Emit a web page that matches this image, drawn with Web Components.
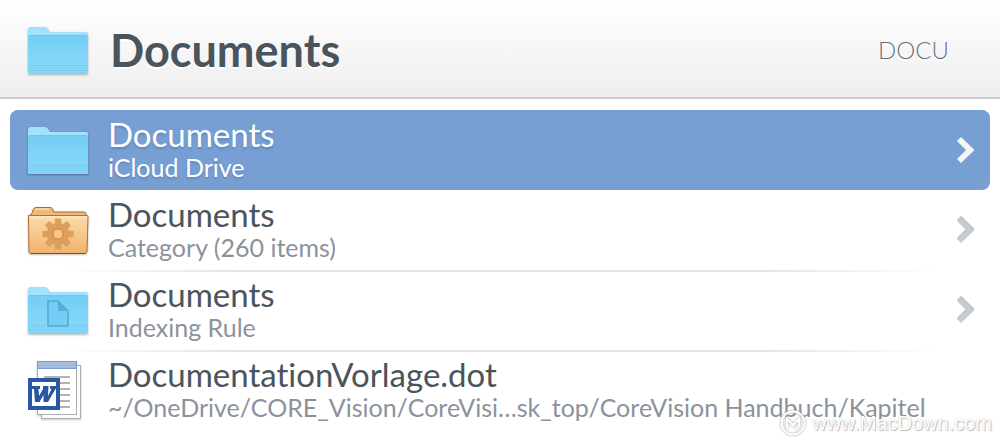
<!DOCTYPE html>
<html lang="en">
<head>
<meta charset="utf-8">
<title>Documents</title>
<style>
html, body { margin: 0; background: #fff; }
body { font-family: Lato, "Open Sans", sans-serif; font-variant-ligatures: none; color: #4a545c; overflow: hidden; min-height: 100vh; position: relative; }
</style>
</head>
<body>
<search-panel>
  <panel-header slot="header" abbreviation="DOCU"><item-icon kind="folder" slot="icon"></item-icon>Documents</panel-header>
  <result-row selected more><item-icon kind="folder" slot="icon"></item-icon>Documents<span slot="detail">iCloud Drive</span></result-row>
  <result-row more divided><item-icon kind="category" slot="icon"></item-icon>Documents<span slot="detail">Category (260 items)</span></result-row>
  <result-row more divided><item-icon kind="rule" slot="icon"></item-icon>Documents<span slot="detail">Indexing Rule</span></result-row>
  <result-row><item-icon kind="word" slot="icon"></item-icon>DocumentationVorlage.dot<span slot="detail">~/OneDrive/CORE_Vision/CoreVisi…sk_top/CoreVision Handbuch/Kapitel</span></result-row>
</search-panel>
<site-mark>www.MacDown.com</site-mark>

<script>
const folder = extra => `
<svg viewBox="0 0 64 64" aria-hidden="true">
  <defs><linearGradient id="f" x1="0" y1="0" x2="0" y2="1"><stop offset="0" stop-color="#74cdf5"/><stop offset="1" stop-color="#8bdbfa"/></linearGradient></defs>
  <g style="filter:drop-shadow(0 1px 1px rgba(0,0,0,.28))">
    <path d="M2 10Q2 7 5 7H19Q21 7 22 9L24 12H60Q62 12 62 14V52Q62 54 60 54H4Q2 54 2 52Z" fill="#a2e2fd"/>
    <path d="M2 17Q2 15 4 15H60Q62 15 62 17V52Q62 54 60 54H4Q2 54 2 52Z" fill="url(#f)"/>
  </g>
  <path d="M3 15.500H61" stroke="#75c1e0" stroke-width=".8"/>
  <path d="M2 45.500H62M2 48H62M2 50.500H62M3 53H61" stroke="#6cc5ea" stroke-width=".6"/>
  ${extra}
</svg>`;
const teeth = [0, 45, 90, 135, 180, 225, 270, 315].map(a => `<path d="M-3.500 -10L-3 -15.500H3L3.500 -10Z" transform="rotate(${a})"/>`).join('');
const icons = {
  folder: folder(''),
  rule: folder(`<path d="M22 21H32L42 31V46H22Z" fill="#75cdf2" stroke="#4baddb" stroke-width="1.600"/><path d="M32 21V31H42Z" fill="#51b0db"/>`),
  category: `
<svg viewBox="0 0 64 64" aria-hidden="true">
  <defs><linearGradient id="c" x1="0" y1="0" x2="0" y2="1"><stop offset="0" stop-color="#fddcaa"/><stop offset="1" stop-color="#efb26d"/></linearGradient></defs>
  <g style="filter:drop-shadow(0 1px 1px rgba(60,30,0,.3))">
    <path d="M5 17V14Q7 13 7 10Q8 7.500 10 7.500H24Q27 7.500 27.500 12H58Q60 12 60 14V17Z" fill="#efb97a" stroke="#a36b39"/>
    <path d="M2.500 16.500Q1.500 15.500 3 15.500H61Q62.500 15.500 62 17L61 51Q61 53.500 59 53.500H5Q3 53.500 3 51Z" fill="url(#c)" stroke="#b06e38"/>
  </g>
  <path d="M9 10Q10 9 11 9H23M4 17H60" stroke="#ffedcb" fill="none"/>
  <path d="M5 53.500H59" stroke="#91451f"/>
  <g transform="translate(32 34)" fill="#dd9e5c">${teeth}<circle r="11"/><circle r="5" fill="#f7c88e" stroke="#c98340"/></g>
</svg>`,
  word: `
<svg viewBox="0 0 64 64" aria-hidden="true">
  <g style="filter:drop-shadow(0 1px 1px rgba(0,0,0,.22))">
    <rect x="15.500" y="5.500" width="39" height="53" fill="#fcfdff" stroke="#adadb0"/>
    <rect x="11.500" y="1.500" width="39" height="53" fill="#fff" stroke="#adadb0"/>
  </g>
  <rect x="11.500" y="1.500" width="39" height="7" fill="#a3bbdf" stroke="#7c9dcd"/>
  <path d="M18 17H44M30 23H44M30 29H44M30 35H44M30 41H44M30 47H44" stroke="#b2b2b2" stroke-width="2"/>
  <rect x="2" y="18" width="32" height="32" fill="#2858a0"/>
  <rect x="6" y="22" width="24" height="24" fill="#fff"/>
  <path d="M6 26H14V29H12.500L13 36L17 29V26H22.500L22 36L25.500 29H24V26H31V29H29.500L22 42H17.500L17.500 35L13.500 42H9L8 29H6Z" fill="#2858a0"/>
</svg>`
};

class BaseElement extends HTMLElement {
  connectedCallback() {
    if (!this.shadowRoot) this.attachShadow({ mode: 'open' }).innerHTML = this.view();
  }
}

customElements.define('item-icon', class extends BaseElement {
  view() {
    return `<style>:host { display: block; width: 64px; flex: none; } svg { display: block; width: 64px; height: 64px; overflow: visible; }</style>${icons[this.getAttribute('kind')]}`;
  }
});

customElements.define('search-panel', class extends BaseElement {
  view() {
    return `<style>:host { display: block; } main { padding: 11px 10px 0; }</style><slot name="header"></slot><main><slot></slot></main>`;
  }
});

customElements.define('panel-header', class extends BaseElement {
  view() {
    return `<style>
      :host { display: block; }
      header { display: flex; align-items: flex-start; gap: 20px; padding: 20px 51px 13px 26px; border-bottom: 2px solid #ccc; background: linear-gradient(#fff, #eee); text-shadow: 0 2px 0 #fff; }
      h1 { flex: 1; margin: 0; font-size: 45px; line-height: 60px; font-weight: 700; }
      output { font-size: 24px; line-height: 60px; font-weight: 300; color: #6b717d; }
    </style>
    <header><slot name="icon"></slot><h1><slot></slot></h1><output>${this.getAttribute('abbreviation')}</output></header>`;
  }
});

customElements.define('result-row', class extends BaseElement {
  view() {
    const chevron = this.hasAttribute('more')
      ? `<svg viewBox="0 0 20 28" aria-hidden="true"><path d="M1 5L5 1L18.500 14L5 27L1 23L10 14Z"/></svg>` : '';
    return `<style>
      :host { display: block; }
      a { display: flex; align-items: center; gap: 18px; box-sizing: border-box; min-height: 80px; padding: 0 14px 0 16px; border-radius: 8px; color: inherit; text-decoration: none; position: relative; }
      ::slotted(item-icon) { padding-top: 4px; }
      .text { flex: 1; min-width: 0; white-space: nowrap; padding-bottom: 2px; }
      .name, .detail { display: block; }
      .name { font-size: 33px; line-height: 36px; }
      .detail { font-size: 25px; line-height: 30px; color: #8c929d; }
      svg { width: 20px; height: 28px; fill: #c3cbd5; filter: drop-shadow(0 -1px 0 #a9b1bb); }
      :host([selected]) a { background: #779fd3; color: #fff; text-shadow: 0 2px 2px rgba(40,70,120,.25); }
      :host([selected]) .detail { color: #fff; }
      :host([selected]) svg { fill: #f5f5f5; filter: none; }
      :host([divided]) a::after { content: ""; position: absolute; left: 50px; right: 50px; bottom: -2px; height: 2px; background: linear-gradient(90deg, transparent, #e4e4e4 20%, #e4e4e4 80%, transparent); }
    </style>
    <a href="#"><slot name="icon"></slot><span class="text"><span class="name"><slot></slot></span><span class="detail"><slot name="detail"></slot></span></span>${chevron}</a>`;
  }
});

customElements.define('site-mark', class extends BaseElement {
  view() {
    return `<style>
      :host { position: absolute; right: 8px; bottom: 4px; display: flex; align-items: center; gap: 6px; font: 20px/26px "Liberation Sans", sans-serif; color: #fff; text-shadow: 0 0 1px #bbb, 1px 1px 1px #bbb; }
      svg { width: 26px; height: 26px; fill: none; stroke: #fff; stroke-width: 2; filter: drop-shadow(0 0 1px #999); }
    </style>
    <svg viewBox="0 0 26 26" aria-hidden="true"><circle cx="13" cy="13" r="11.500"/><path d="M7 18V9L13 15L19 9V16L15 20"/></svg><span><slot></slot></span>`;
  }
});
</script>
</body>
</html>
